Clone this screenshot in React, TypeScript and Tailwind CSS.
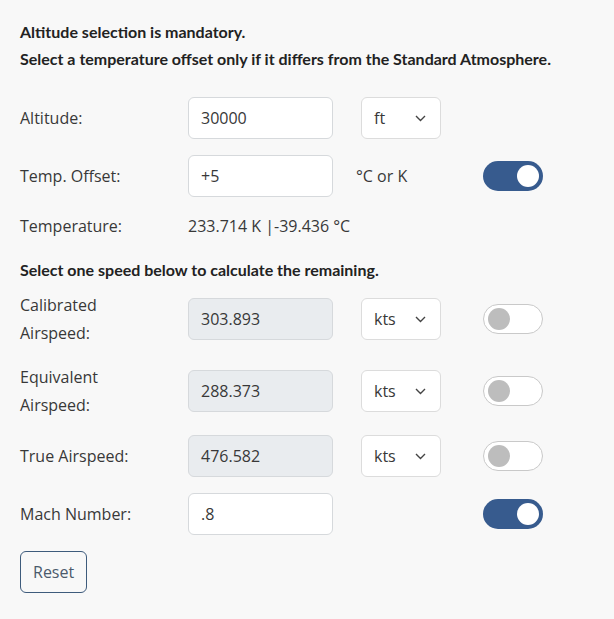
import { useState } from "react";

type Unit = "ft" | "kts";

function Toggle({ on }: { on: boolean }) {
  return (
    <div
      className={
        on
          ? "flex h-[30px] w-[60px] items-center justify-end rounded-full bg-[#375b8e] px-[4px]"
          : "flex h-[30px] w-[60px] items-center justify-start rounded-full border border-[#c9c9c9] bg-white px-[4px]"
      }
    >
      <div
        className={
          on
            ? "h-[22px] w-[22px] rounded-full bg-white"
            : "h-[22px] w-[22px] rounded-full bg-[#bdbdbd]"
        }
      />
    </div>
  );
}

function UnitSelect({ unit }: { unit: Unit }) {
  return (
    <div className="ml-[5px] flex h-[42px] w-[80px] items-center justify-between rounded-[6px] border border-[#dcdcdc] bg-white pl-[12px] pr-[14px]">
      <span>{unit}</span>
      <svg width="11" height="7" viewBox="0 0 11 7" fill="none">
        <path d="M1 1l4.5 4.5L10 1" stroke="#444" strokeWidth="1.4" />
      </svg>
    </div>
  );
}

function Field({ value, disabled }: { value: string; disabled?: boolean }) {
  return (
    <div
      className={
        disabled
          ? "flex h-[42px] w-[145px] items-center rounded-[6px] border border-[#d6d9dc] bg-[#e9ecef] px-[12px]"
          : "flex h-[42px] w-[145px] items-center rounded-[6px] border border-[#d6d9dc] bg-white px-[12px]"
      }
    >
      {value}
    </div>
  );
}

const speeds = [
  { label: ["Calibrated", "Airspeed:"], value: "303.893" },
  { label: ["Equivalent", "Airspeed:"], value: "288.373" },
  { label: ["True Airspeed:"], value: "476.582" },
];

export default function App() {
  const [altitude] = useState("30000");

  return (
    <div className="min-h-[619px] bg-[#f8f8f8] px-[20px] pt-[18px] font-['Open_Sans',sans-serif] text-[16px] leading-[28px] text-[#383838]">
      <p className="font-['Lato',sans-serif] font-bold leading-[27px] text-[#222]">
        Altitude selection is mandatory.
      </p>
      <p className="font-['Lato',sans-serif] font-bold leading-[27px] text-[#222]">
        Select a temperature offset only if it differs from the Standard Atmosphere.
      </p>

      <div className="mt-[25px] flex items-center">
        <div className="w-[168px]">Altitude:</div>
        <Field value={altitude} />
        <div className="ml-[23px] w-[127px]">
          <UnitSelect unit="ft" />
        </div>
      </div>

      <div className="mt-[16px] flex items-center">
        <div className="w-[168px]">Temp. Offset:</div>
        <Field value="+5" />
        <div className="ml-[23px] w-[127px]">°C or K</div>
        <Toggle on />
      </div>

      <div className="mt-[15px] flex items-center">
        <div className="w-[168px]">Temperature:</div>
        <div>233.714 K |-39.436 °C</div>
      </div>

      <p className="mt-[16px] font-['Lato',sans-serif] font-bold leading-[27px] text-[#222]">
        Select one speed below to calculate the remaining.
      </p>

      <div className="mt-[8px] flex flex-col gap-[16px]">
        {speeds.map((s) => (
          <div key={s.value} className="flex items-center">
            <div className="w-[168px]">
              {s.label.map((l) => (
                <div key={l}>{l}</div>
              ))}
            </div>
            <Field value={s.value} disabled />
            <div className="ml-[23px] w-[127px]">
              <UnitSelect unit="kts" />
            </div>
            <Toggle on={false} />
          </div>
        ))}

        <div className="flex items-center">
          <div className="w-[168px]">Mach Number:</div>
          <Field value=".8" />
          <div className="ml-[23px] w-[127px]" />
          <Toggle on />
        </div>
      </div>

      <button className="mt-[16px] h-[42px] rounded-[6px] border border-[#3e5b7c] px-[12px] text-[#4b5a6c]">
        Reset
      </button>
    </div>
  );
}
